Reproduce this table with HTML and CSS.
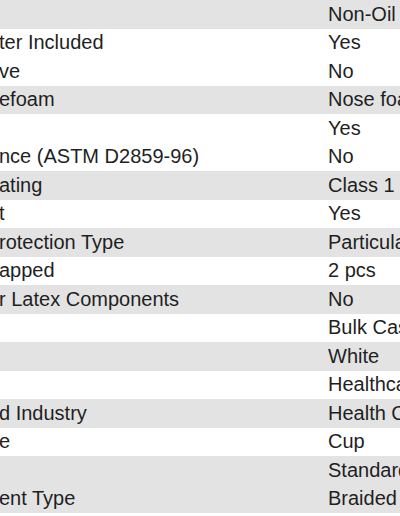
FILE: index.html
```html
<!DOCTYPE html>
<html lang="en">
<head>
<meta charset="utf-8">
<title>Specifications</title>
<link rel="stylesheet" href="styles.css">
</head>
<body>
<div class="spec">
  <div class="row shade"><div class="label"></div><div class="value">Non-Oil</div></div>
  <div class="row"><div class="label">ter Included</div><div class="value">Yes</div></div>
  <div class="row"><div class="label">ve</div><div class="value">No</div></div>
  <div class="row shade"><div class="label">efoam</div><div class="value">Nose foam</div></div>
  <div class="row"><div class="label"></div><div class="value">Yes</div></div>
  <div class="row"><div class="label">nce (ASTM D2859-96)</div><div class="value">No</div></div>
  <div class="row shade"><div class="label">ating</div><div class="value">Class 1</div></div>
  <div class="row"><div class="label">t</div><div class="value">Yes</div></div>
  <div class="row shade"><div class="label">rotection Type</div><div class="value">Particulate</div></div>
  <div class="row"><div class="label">apped</div><div class="value">2 pcs</div></div>
  <div class="row shade"><div class="label">r Latex Components</div><div class="value">No</div></div>
  <div class="row"><div class="label"></div><div class="value">Bulk Case</div></div>
  <div class="row shade"><div class="label"></div><div class="value">White</div></div>
  <div class="row"><div class="label"></div><div class="value">Healthcare</div></div>
  <div class="row shade"><div class="label">d Industry</div><div class="value">Health Care</div></div>
  <div class="row"><div class="label">e</div><div class="value">Cup</div></div>
  <div class="row shade"><div class="label"></div><div class="value">Standard</div></div>
  <div class="row shade"><div class="label">ent Type</div><div class="value">Braided</div></div>
</div>
</body>
</html>
```

FILE: styles.css
```css
html, body {
  margin: 0;
  padding: 0;
  background: #ffffff;
  overflow: hidden;
}

body {
  width: 400px;
  height: 516px;
  font-family: "Liberation Sans", Arial, sans-serif;
  font-size: 20px;
  color: #1f1f1f;
}

.spec {
  display: flex;
  flex-direction: column;
  width: 400px;
  overflow: hidden;
}

.row {
  display: grid;
  grid-template-columns: 328px 1fr;
  height: 28.5px;
  align-items: center;
  white-space: nowrap;
  overflow: hidden;
}

.row.shade {
  background: #e3e3e3;
}

.label {
  margin-left: -1px;
  overflow: hidden;
}

.value {
  overflow: hidden;
}
```
